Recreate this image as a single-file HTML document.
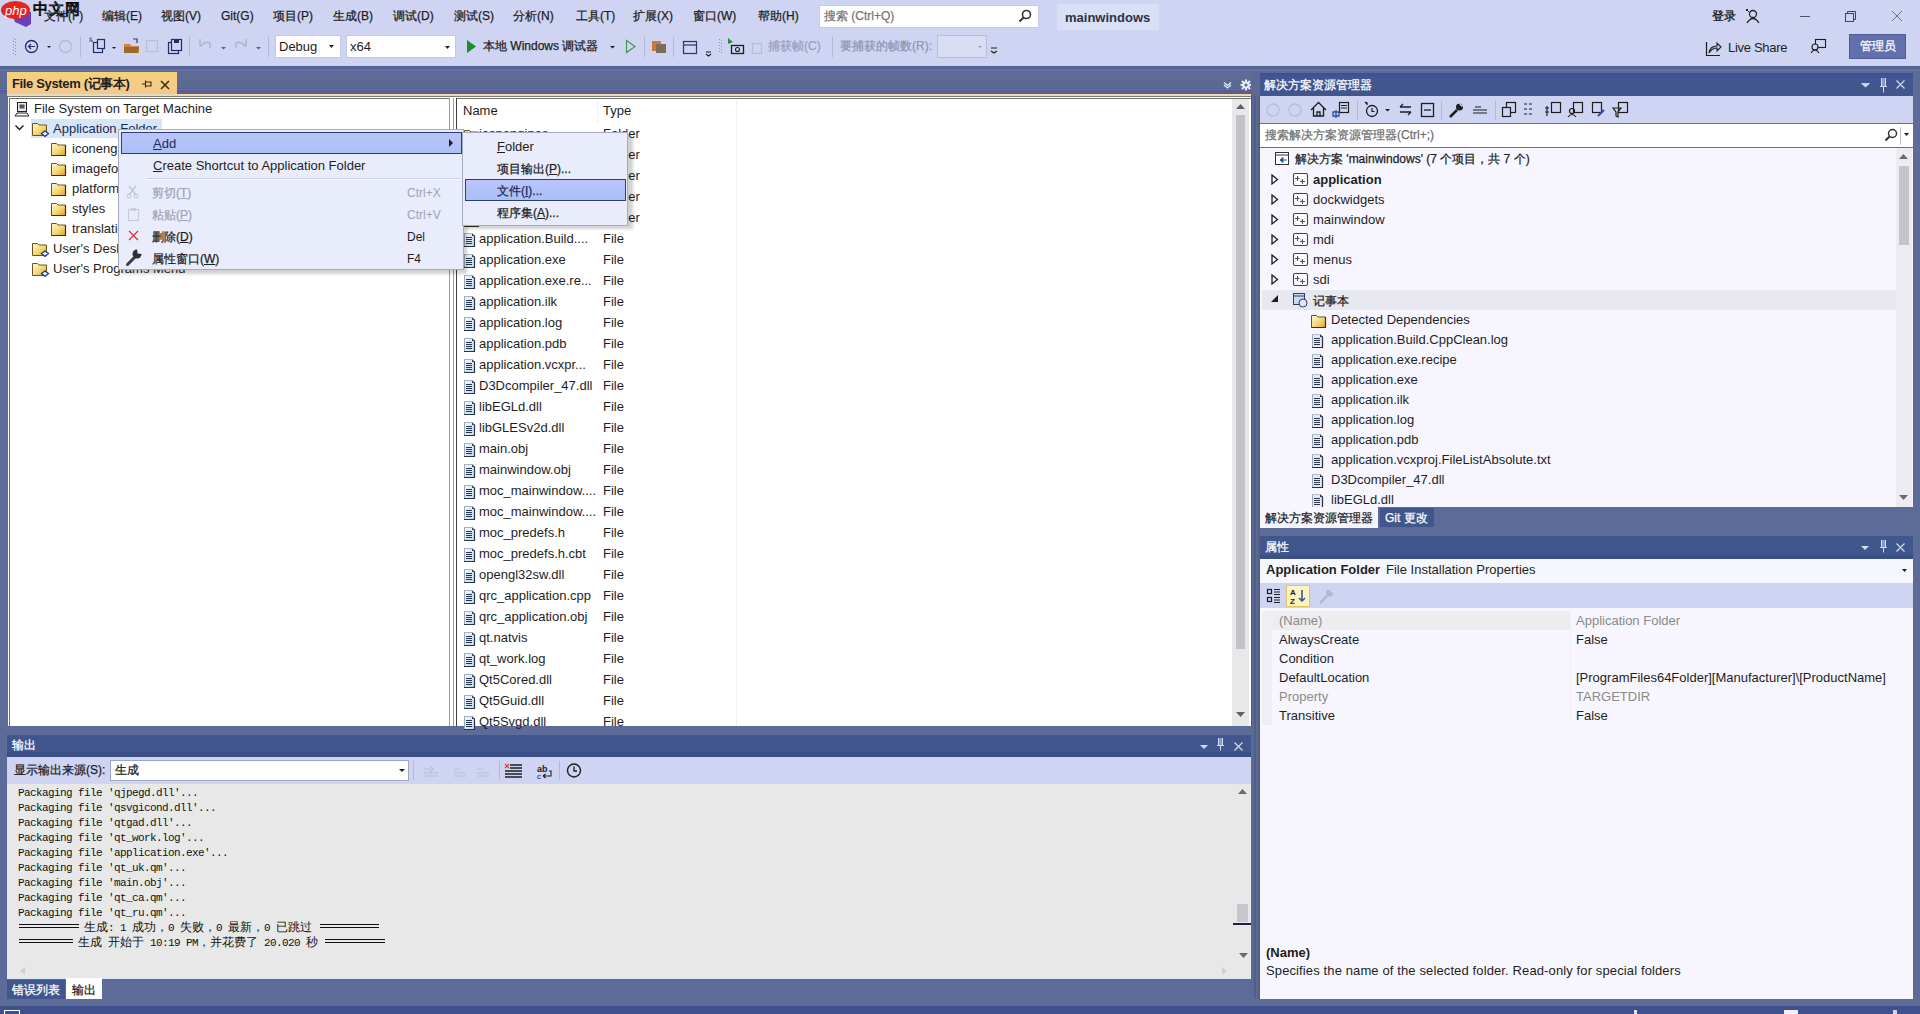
<!DOCTYPE html>
<html><head><meta charset="utf-8">
<style>
*{margin:0;padding:0;box-sizing:border-box}
html,body{width:1920px;height:1014px;overflow:hidden;background:#5D6B99;font-family:"Liberation Sans",sans-serif;font-size:13px;color:#1E1E1E}
.a{position:absolute}
.t{position:absolute;white-space:nowrap;line-height:16px}
.cj{font-size:12px;-webkit-text-stroke:0.25px currentColor}
svg{position:absolute;overflow:visible}
</style></head><body>

<!-- ===== TOP BAR ===== -->
<div class="a" style="left:0;top:0;width:1920px;height:66px;background:#CED4F1"></div>
<!-- logo watermark -->
<svg style="left:0;top:0" width="90" height="30">
  <path d="M12 14 L22 10 L31 12 L31 24 L26 27 L15 22 Z" fill="#6B3FB8"/>
  <ellipse cx="15.5" cy="10" rx="14.5" ry="9" fill="#E8241C"/>
  <text x="5" y="14.5" font-family="Liberation Sans" font-size="13" font-style="italic" fill="#fff">php</text>
  <text x="33" y="14" font-size="15" fill="#DDE1F2" stroke="#000" stroke-width="0.9" letter-spacing="1">中文网</text>
</svg>
<div class="t cj" style="left:44px;top:8px">文件(F)</div>
<div class="t cj" style="left:102px;top:8px">编辑(E)</div>
<div class="t cj" style="left:161px;top:8px">视图(V)</div>
<div class="t cj" style="left:221px;top:8px">Git(G)</div>
<div class="t cj" style="left:273px;top:8px">项目(P)</div>
<div class="t cj" style="left:333px;top:8px">生成(B)</div>
<div class="t cj" style="left:393px;top:8px">调试(D)</div>
<div class="t cj" style="left:454px;top:8px">测试(S)</div>
<div class="t cj" style="left:513px;top:8px">分析(N)</div>
<div class="t cj" style="left:576px;top:8px">工具(T)</div>
<div class="t cj" style="left:633px;top:8px">扩展(X)</div>
<div class="t cj" style="left:693px;top:8px">窗口(W)</div>
<div class="t cj" style="left:758px;top:8px">帮助(H)</div>
<!-- search -->
<div class="a" style="left:819px;top:5px;width:220px;height:23px;background:#fff;border:1px solid #C6CBE0"></div>
<div class="t cj" style="left:824px;top:8px;color:#777">搜索 (Ctrl+Q)</div>
<svg style="left:1018px;top:9px" width="14" height="14"><circle cx="8.5" cy="5.5" r="4" fill="none" stroke="#333" stroke-width="1.6"/><path d="M5.5 8.5 L1.5 12.5" stroke="#333" stroke-width="2"/></svg>
<!-- solution name -->
<div class="a" style="left:1057px;top:4px;width:102px;height:26px;background:#D9DFF5"></div>
<div class="t" style="left:1065px;top:10px;font-weight:bold;color:#2B3245">mainwindows</div>
<!-- login -->
<div class="t cj" style="left:1712px;top:8px;color:#111;-webkit-text-stroke:0.3px #111">登录</div>
<svg style="left:1744px;top:8px" width="18" height="16"><circle cx="9" cy="6" r="3.5" fill="none" stroke="#222" stroke-width="1.3"/><path d="M3 15 Q9 6 15 15" fill="none" stroke="#222" stroke-width="1.3"/><path d="M2 1 L5 4 M4 1 L2 3" stroke="#222" stroke-width="1"/></svg>
<!-- window controls -->
<div class="a" style="left:1800px;top:16px;width:10px;height:1px;background:#50546A"></div>
<svg style="left:1845px;top:11px" width="12" height="12"><rect x="0.5" y="2.5" width="8" height="8" fill="none" stroke="#444"/><path d="M2.5 2.5 V0.5 H10.5 V8.5 H8.5" fill="none" stroke="#444"/></svg>
<svg style="left:1891px;top:10px" width="12" height="12"><path d="M1 1 L11 11 M11 1 L1 11" stroke="#6A6E80" stroke-width="1"/></svg>



<!-- ===== TOOLBAR ===== -->
<svg style="left:0;top:33px" width="1920" height="33">
 <g fill="#8C94B8"><rect x="13" y="5" width="1" height="1"/><rect x="13" y="8" width="1" height="1"/><rect x="13" y="11" width="1" height="1"/><rect x="13" y="14" width="1" height="1"/><rect x="13" y="17" width="1" height="1"/><rect x="13" y="20" width="1" height="1"/><rect x="15" y="6" width="1" height="1"/><rect x="15" y="9" width="1" height="1"/><rect x="15" y="12" width="1" height="1"/><rect x="15" y="15" width="1" height="1"/><rect x="15" y="18" width="1" height="1"/><rect x="15" y="21" width="1" height="1"/></g>
 <!-- back -->
 <circle cx="31.5" cy="13.5" r="6" fill="none" stroke="#1F2E66" stroke-width="1.3"/>
 <path d="M28.5 13.5 H35 M31 11 L28.5 13.5 L31 16" fill="none" stroke="#1F2E66" stroke-width="1.2"/>
 <path d="M47 13 h4 l-2 2z" fill="#1E1E1E"/>
 <circle cx="65.5" cy="13.5" r="6" fill="none" stroke="#B4BAD4" stroke-width="1.3"/>
 <rect x="80" y="4" width="1" height="20" fill="#B2B9D6"/>
 <!-- new project -->
 <rect x="93.5" y="9.5" width="9" height="10" fill="none" stroke="#1F2E66" stroke-width="1.2"/>
 <rect x="97.5" y="6.5" width="7" height="9" fill="#CED4F1" stroke="#1F2E66" stroke-width="1.2"/>
 <path d="M89 5 l4 4 M89 8 h4 M91 4 v4" stroke="#555" stroke-width="0.8"/>
 <path d="M112 14 h4 l-2 2z" fill="#1E1E1E"/>
 <!-- open -->
 <path d="M124 11 h6 l1 2 h8 v7 h-15z" fill="#C8873C"/>
 <path d="M124 14 h15 l-1 6 h-14z" fill="#A0672A"/>
 <path d="M133 6 l4 0 l0 4" fill="none" stroke="#2F3B70" stroke-width="1.2"/>
 <!-- save disabled -->
 <rect x="146.5" y="7.5" width="11" height="11" fill="none" stroke="#B8BED8" stroke-width="1.2"/>
 <!-- save all -->
 <rect x="168.5" y="9.5" width="10" height="11" fill="none" stroke="#1F2E66" stroke-width="1.2"/>
 <rect x="171.5" y="6.5" width="10" height="11" fill="#CED4F1" stroke="#1F2E66" stroke-width="1.2"/>
 <rect x="174" y="7" width="5" height="3" fill="#1F2E66"/>
 <rect x="189" y="4" width="1" height="20" fill="#B2B9D6"/>
 <!-- undo redo disabled -->
 <path d="M200 6 v7 h2 M201 13 q4 -5 9 -3 v5" fill="none" stroke="#B0B6D2" stroke-width="1.6"/>
 <path d="M221 14 h5 l-2.5 2.5z" fill="#5A5E84"/>
 <path d="M246 6 v7 h-2 M245 13 q-4 -5 -9 -3 v5" fill="none" stroke="#B0B6D2" stroke-width="1.6"/>
 <path d="M256 14 h5 l-2.5 2.5z" fill="#5A5E84"/>
 <rect x="268" y="4" width="1" height="20" fill="#B2B9D6"/>
 <!-- play -->
 <path d="M467 7 L476 13.5 L467 20z" fill="#1E8C2E"/>
 <path d="M610 13 h5 l-2.5 2.5z" fill="#1E1E1E"/>
 <path d="M626.5 7.5 L635 13.5 L626.5 19.5z" fill="none" stroke="#3C9C4C" stroke-width="1.2"/>
 <rect x="644" y="4" width="1" height="20" fill="#B2B9D6"/>
 <!-- attach icon -->
 <rect x="652" y="8" width="9" height="10" fill="#C97B3C"/>
 <rect x="656" y="11" width="10" height="9" fill="#7E6C5A"/>
 <rect x="673" y="4" width="1" height="20" fill="#B2B9D6"/>
 <!-- window icon -->
 <rect x="683.5" y="8.5" width="13" height="12" fill="none" stroke="#2B3566" stroke-width="1.2"/>
 <path d="M684 12 h12" stroke="#2B3566" stroke-width="1.2"/>
 <path d="M706 19 h5 M706 21 l2.5 2 l2.5 -2" stroke="#1E1E1E" stroke-width="1.1" fill="none"/>
 <g fill="#8C94B8"><rect x="719" y="6" width="1" height="1"/><rect x="719" y="9" width="1" height="1"/><rect x="719" y="12" width="1" height="1"/><rect x="719" y="15" width="1" height="1"/><rect x="719" y="18" width="1" height="1"/><rect x="721" y="7" width="1" height="1"/><rect x="721" y="10" width="1" height="1"/><rect x="721" y="13" width="1" height="1"/><rect x="721" y="16" width="1" height="1"/><rect x="721" y="19" width="1" height="1"/></g>
 <!-- capture icon -->
 <path d="M728 5 l5 4 l-5 2z" fill="#2A8A3A"/>
 <rect x="731.5" y="12.5" width="12" height="8" fill="none" stroke="#1E1E1E" stroke-width="1.3"/>
 <circle cx="737.5" cy="16.5" r="2" fill="none" stroke="#1E1E1E" stroke-width="1.1"/>
 <rect x="752.5" y="10.5" width="9" height="10" fill="none" stroke="#B8BED8" stroke-width="1.2"/>
 <rect x="832" y="4" width="1" height="20" fill="#B2B9D6"/>
 <path d="M991 15 h6 M991 18 l3 2 l3 -2" stroke="#1E1E1E" stroke-width="1.1" fill="none"/>
 <!-- live share icon -->
 <path d="M1706.5 9 v13.5 h13.5" fill="none" stroke="#1E1E1E" stroke-width="1.2"/>
 <path d="M1709 20 q1 -7 8 -7 v-3 l4 4 l-4 4 v-3 q-5 0 -8 5z" fill="none" stroke="#1E1E1E" stroke-width="1.1"/>
 <!-- feedback icon -->
 <rect x="1815.5" y="6.5" width="10" height="8" fill="none" stroke="#1E1E1E" stroke-width="1.1"/>
 <circle cx="1815" cy="14" r="3" fill="#CED4F1" stroke="#1E1E1E" stroke-width="1.1"/>
 <path d="M1811 20 q4 -6 8 0" fill="none" stroke="#1E1E1E" stroke-width="1.1"/>
</svg>
<div class="a" style="left:275px;top:35px;width:66px;height:23px;background:#fff;border:1px solid #C2C8DD"></div>
<div class="t" style="left:279px;top:39px">Debug</div>
<svg style="left:329px;top:45px" width="6" height="4"><path d="M0 0h5l-2.5 3z" fill="#1E1E1E"/></svg>
<div class="a" style="left:346px;top:35px;width:110px;height:23px;background:#fff;border:1px solid #C2C8DD"></div>
<div class="t" style="left:350px;top:39px">x64</div>
<svg style="left:445px;top:46px" width="6" height="4"><path d="M0 0h5l-2.5 3z" fill="#1E1E1E"/></svg>
<div class="t cj" style="left:483px;top:38px">本地 Windows 调试器</div>
<div class="t cj" style="left:768px;top:38px;color:#9AA0BC">捕获帧(C)</div>
<div class="t cj" style="left:840px;top:38px;color:#8E95B3">要捕获的帧数(R):</div>
<div class="a" style="left:937px;top:35px;width:50px;height:23px;background:#D8DDF3;border:1px solid #B8BED8"></div>
<svg style="left:978px;top:46px" width="6" height="4"><path d="M0 0h4l-2 2z" fill="#9AA0BC"/></svg>
<div class="t" style="left:1728px;top:40px;letter-spacing:-0.3px">Live Share</div>
<div class="a" style="left:1849px;top:34px;width:57px;height:25px;background:#6271AC;border:1px solid #4E5C96"></div>
<div class="t cj" style="left:1860px;top:38px;color:#fff">管理员</div>

<!-- ===== DARK BAND ===== -->
<div class="a" style="left:0;top:66px;width:1920px;height:6px;background:linear-gradient(#4E5F8E 0 1px,#5D6C9E 1px 2px,#4F5F90 2px 3px,#6272A3 3px 5px,#5B6A9A 5px)"></div>

<!-- ===== LEFT DOC WELL ===== -->

<svg width="0" height="0" style="position:absolute">
 <defs>
  <linearGradient id="gfold" x1="0" y1="0" x2="1" y2="1"><stop offset="0" stop-color="#FFF8D8"/><stop offset="0.55" stop-color="#F5D870"/><stop offset="1" stop-color="#E39A2A"/></linearGradient>
  <linearGradient id="gfile" x1="0" y1="0" x2="1" y2="1"><stop offset="0" stop-color="#F4FBFF"/><stop offset="1" stop-color="#BFD6EC"/></linearGradient>
  <g id="ifold"><path d="M0.5 1.5 h5 l1.5 1.5 h7.5 v10.5 h-14z" fill="url(#gfold)" stroke="#6A5526" stroke-width="1"/><path d="M14.5 3 v10.5 h-14" fill="none" stroke="#3C2E10" stroke-width="1.2"/></g>
  <g id="ifoldsp"><path d="M0.5 1.5 h5 l1.5 1.5 h7.5 v10.5 h-14z" fill="url(#gfold)" stroke="#6A5526" stroke-width="1"/><path d="M13 9 l3.5 2.5 l-3.5 3 l-3.5 -3z" fill="#E8F0FF" stroke="#1E3A8A" stroke-width="1.3"/></g>
  <g id="ifile"><path d="M0 1 h8 l3 3 v11 h-11z" fill="url(#gfile)"/><path d="M0.5 1 v13.5" stroke="#9AA6B8" stroke-width="1"/><path d="M0.5 1.5 h7.5" stroke="#A8B2C2" stroke-width="1"/><path d="M10.5 3.5 v11 M0 14.5 h11" stroke="#2A3548" stroke-width="1.2"/><path d="M8 1 l3 3 h-3z" fill="#3A4A5C"/><path d="M2 5.5 h6 M2 7.5 h6 M2 9.5 h6 M2 11.5 h6" stroke="#25354F" stroke-width="1"/></g>
  <g id="icomp"><rect x="3.5" y="0.5" width="9" height="9" fill="#E8E8E8" stroke="#222" stroke-width="1"/><rect x="5.5" y="2.5" width="5" height="4" fill="#555"/><path d="M1 14 l2 -3 h10 l2 3z" fill="#fff" stroke="#222" stroke-width="1"/></g>
 </defs>
</svg>
<!-- tab row -->
<div class="a" style="left:0;top:72px;width:1252px;height:22px;background:linear-gradient(#5D6B96 0 8px,#5E6898 8px 10px,#5A6C8E 10px 16px,#53639A 16px 17px,#6470AE 17px 18px,#57599A 18px 19px,#5F6290 19px 20px)"></div>
<div class="a" style="left:177px;top:92px;width:1075px;height:2px;background:#675A78"></div>
<div class="a" style="left:7px;top:72px;width:170px;height:24px;background:linear-gradient(#F2D27A,#F5CC84 40%,#F3C78C)"></div>
<div class="t" style="left:12px;top:76px;font-weight:bold;color:#1E1E1E;letter-spacing:-0.35px">File System (记事本)</div>
<svg style="left:142px;top:79px" width="11" height="10"><path d="M0 5 h3 M3.5 1.5 v7 M3.5 3 h5.5 v4 h-5.5" fill="none" stroke="#3A2A10" stroke-width="1.1"/></svg>
<svg style="left:160px;top:80px" width="10" height="10"><path d="M1 1 L9 9 M9 1 L1 9" stroke="#3A2A10" stroke-width="1.5"/></svg>
<svg style="left:1223px;top:81px" width="10" height="8"><path d="M1 1.5 L4.5 4.5 L8 1.5 M1 4 L4.5 7 L8 4" fill="none" stroke="#E8ECF8" stroke-width="1.3"/></svg>
<svg style="left:1240px;top:79px" width="12" height="12"><g stroke="#E8ECF8" stroke-width="2"><path d="M6 0.5 v11 M0.5 6 h11 M2 2 l8 8 M10 2 l-8 8"/></g><circle cx="6" cy="6" r="3.6" fill="#E8ECF8"/><circle cx="6" cy="6" r="1.6" fill="#5D6B99"/></svg>
<div class="a" style="left:7px;top:94px;width:1244px;height:2px;background:#E6DCBC"></div>
<!-- content -->
<div class="a" style="left:8px;top:96px;width:1243px;height:630px;background:#fff;border-top:1px solid #7C7C70"></div>
<div class="a" style="left:9px;top:98px;width:440px;height:628px;background:#FFFFFF;border-top:1px solid #6E6E6E;border-left:1px solid #6E6E6E"></div>
<div class="a" style="left:449px;top:98px;width:8px;height:628px;background:#fff;border-left:1px solid #A0A0A0;border-right:1px solid #404040"></div>
<div class="a" style="left:453px;top:98px;width:1px;height:628px;background:#A0A0A0"></div>
<div class="a" style="left:457px;top:98px;width:794px;height:628px;background:#fff;border-top:1px solid #6E6E6E"></div>
<div class="a" style="left:597px;top:100px;width:1px;height:24px;background:#F0F0F0"></div>
<div class="a" style="left:736px;top:100px;width:1px;height:626px;background:#F0F0F0"></div>
<div class="t" style="left:463px;top:103px">Name</div>
<div class="t" style="left:603px;top:103px">Type</div>
<svg style="left:14px;top:102px" width="16" height="15"><use href="#icomp"/></svg><div class="t" style="left:34px;top:101px">File System on Target Machine</div>
<div class="a" style="left:31px;top:119px;width:131px;height:19px;background:#D5E6F7"></div>
<svg style="left:15px;top:125px" width="10" height="6"><path d="M0.5 0.5 L4.5 4.5 L8.5 0.5" fill="none" stroke="#1E1E1E" stroke-width="1.4"/></svg>
<svg style="left:32px;top:122px" width="17" height="14"><use href="#ifoldsp"/></svg><div class="t" style="left:53px;top:121px;color:#1B2A55">Application Folder</div>
<svg style="left:51px;top:142px" width="16" height="14"><use href="#ifold"/></svg><div class="t" style="left:72px;top:141px">iconengines</div>
<svg style="left:51px;top:162px" width="16" height="14"><use href="#ifold"/></svg><div class="t" style="left:72px;top:161px">imageformats</div>
<svg style="left:51px;top:182px" width="16" height="14"><use href="#ifold"/></svg><div class="t" style="left:72px;top:181px">platforms</div>
<svg style="left:51px;top:202px" width="16" height="14"><use href="#ifold"/></svg><div class="t" style="left:72px;top:201px">styles</div>
<svg style="left:51px;top:222px" width="16" height="14"><use href="#ifold"/></svg><div class="t" style="left:72px;top:221px">translations</div>
<svg style="left:32px;top:242px" width="17" height="14"><use href="#ifoldsp"/></svg><div class="t" style="left:53px;top:241px">User's Desktop</div>
<svg style="left:32px;top:262px" width="17" height="14"><use href="#ifoldsp"/></svg><div class="t" style="left:53px;top:261px">User's Programs Menu</div>
<svg style="left:464px;top:129px" width="16" height="14"><use href="#ifold"/></svg><div class="t" style="left:479px;top:126px">iconengines</div><div class="t" style="left:603px;top:126px">Folder</div>
<svg style="left:464px;top:150px" width="16" height="14"><use href="#ifold"/></svg><div class="t" style="left:479px;top:147px">imageformats</div><div class="t" style="left:603px;top:147px">Folder</div>
<svg style="left:464px;top:171px" width="16" height="14"><use href="#ifold"/></svg><div class="t" style="left:479px;top:168px">platforms</div><div class="t" style="left:603px;top:168px">Folder</div>
<svg style="left:464px;top:192px" width="16" height="14"><use href="#ifold"/></svg><div class="t" style="left:479px;top:189px">styles</div><div class="t" style="left:603px;top:189px">Folder</div>
<svg style="left:464px;top:213px" width="16" height="14"><use href="#ifold"/></svg><div class="t" style="left:479px;top:210px">translations</div><div class="t" style="left:603px;top:210px">Folder</div>
<svg style="left:464px;top:232px" width="12" height="15"><use href="#ifile"/></svg><div class="t" style="left:479px;top:231px">application.Build....</div><div class="t" style="left:603px;top:231px">File</div>
<svg style="left:464px;top:253px" width="12" height="15"><use href="#ifile"/></svg><div class="t" style="left:479px;top:252px">application.exe</div><div class="t" style="left:603px;top:252px">File</div>
<svg style="left:464px;top:274px" width="12" height="15"><use href="#ifile"/></svg><div class="t" style="left:479px;top:273px">application.exe.re...</div><div class="t" style="left:603px;top:273px">File</div>
<svg style="left:464px;top:295px" width="12" height="15"><use href="#ifile"/></svg><div class="t" style="left:479px;top:294px">application.ilk</div><div class="t" style="left:603px;top:294px">File</div>
<svg style="left:464px;top:316px" width="12" height="15"><use href="#ifile"/></svg><div class="t" style="left:479px;top:315px">application.log</div><div class="t" style="left:603px;top:315px">File</div>
<svg style="left:464px;top:337px" width="12" height="15"><use href="#ifile"/></svg><div class="t" style="left:479px;top:336px">application.pdb</div><div class="t" style="left:603px;top:336px">File</div>
<svg style="left:464px;top:358px" width="12" height="15"><use href="#ifile"/></svg><div class="t" style="left:479px;top:357px">application.vcxpr...</div><div class="t" style="left:603px;top:357px">File</div>
<svg style="left:464px;top:379px" width="12" height="15"><use href="#ifile"/></svg><div class="t" style="left:479px;top:378px">D3Dcompiler_47.dll</div><div class="t" style="left:603px;top:378px">File</div>
<svg style="left:464px;top:400px" width="12" height="15"><use href="#ifile"/></svg><div class="t" style="left:479px;top:399px">libEGLd.dll</div><div class="t" style="left:603px;top:399px">File</div>
<svg style="left:464px;top:421px" width="12" height="15"><use href="#ifile"/></svg><div class="t" style="left:479px;top:420px">libGLESv2d.dll</div><div class="t" style="left:603px;top:420px">File</div>
<svg style="left:464px;top:442px" width="12" height="15"><use href="#ifile"/></svg><div class="t" style="left:479px;top:441px">main.obj</div><div class="t" style="left:603px;top:441px">File</div>
<svg style="left:464px;top:463px" width="12" height="15"><use href="#ifile"/></svg><div class="t" style="left:479px;top:462px">mainwindow.obj</div><div class="t" style="left:603px;top:462px">File</div>
<svg style="left:464px;top:484px" width="12" height="15"><use href="#ifile"/></svg><div class="t" style="left:479px;top:483px">moc_mainwindow....</div><div class="t" style="left:603px;top:483px">File</div>
<svg style="left:464px;top:505px" width="12" height="15"><use href="#ifile"/></svg><div class="t" style="left:479px;top:504px">moc_mainwindow....</div><div class="t" style="left:603px;top:504px">File</div>
<svg style="left:464px;top:526px" width="12" height="15"><use href="#ifile"/></svg><div class="t" style="left:479px;top:525px">moc_predefs.h</div><div class="t" style="left:603px;top:525px">File</div>
<svg style="left:464px;top:547px" width="12" height="15"><use href="#ifile"/></svg><div class="t" style="left:479px;top:546px">moc_predefs.h.cbt</div><div class="t" style="left:603px;top:546px">File</div>
<svg style="left:464px;top:568px" width="12" height="15"><use href="#ifile"/></svg><div class="t" style="left:479px;top:567px">opengl32sw.dll</div><div class="t" style="left:603px;top:567px">File</div>
<svg style="left:464px;top:589px" width="12" height="15"><use href="#ifile"/></svg><div class="t" style="left:479px;top:588px">qrc_application.cpp</div><div class="t" style="left:603px;top:588px">File</div>
<svg style="left:464px;top:610px" width="12" height="15"><use href="#ifile"/></svg><div class="t" style="left:479px;top:609px">qrc_application.obj</div><div class="t" style="left:603px;top:609px">File</div>
<svg style="left:464px;top:631px" width="12" height="15"><use href="#ifile"/></svg><div class="t" style="left:479px;top:630px">qt.natvis</div><div class="t" style="left:603px;top:630px">File</div>
<svg style="left:464px;top:652px" width="12" height="15"><use href="#ifile"/></svg><div class="t" style="left:479px;top:651px">qt_work.log</div><div class="t" style="left:603px;top:651px">File</div>
<svg style="left:464px;top:673px" width="12" height="15"><use href="#ifile"/></svg><div class="t" style="left:479px;top:672px">Qt5Cored.dll</div><div class="t" style="left:603px;top:672px">File</div>
<svg style="left:464px;top:694px" width="12" height="15"><use href="#ifile"/></svg><div class="t" style="left:479px;top:693px">Qt5Guid.dll</div><div class="t" style="left:603px;top:693px">File</div>
<svg style="left:464px;top:715px" width="12" height="15"><use href="#ifile"/></svg><div class="t" style="left:479px;top:714px">Qt5Svgd.dll</div><div class="t" style="left:603px;top:714px">File</div>
<!-- list scrollbar -->
<div class="a" style="left:1232px;top:99px;width:17px;height:627px;background:#E8E8E8"></div>
<svg style="left:1236px;top:104px" width="9" height="5"><path d="M0 5 L4.5 0 L9 5z" fill="#606060"/></svg>
<div class="a" style="left:1236px;top:115px;width:9px;height:534px;background:#C2C3C9"></div>
<svg style="left:1236px;top:712px" width="9" height="5"><path d="M0 0 L4.5 5 L9 0z" fill="#606060"/></svg>



<!-- ===== CONTEXT MENU ===== -->
<div class="a" style="left:121px;top:132px;width:346px;height:142px;background:rgba(0,0,0,0.18);filter:blur(1.5px)"></div>
<div class="a" style="left:118px;top:129px;width:346px;height:141px;background:#E9ECFA;border:1px solid #A6ABC4"></div>
<div class="a" style="left:121px;top:132px;width:341px;height:22px;background:linear-gradient(#BAC4FA,#A9C1F6);border:1px solid #2F3D72"></div>
<div class="t" style="left:153px;top:136px;color:#1E2A5A"><u>A</u>dd</div>
<svg style="left:449px;top:139px" width="5" height="8"><path d="M0 0 L4 4 L0 8z" fill="#1E1E1E"/></svg>
<div class="t" style="left:153px;top:158px"><u>C</u>reate Shortcut to Application Folder</div>
<div class="a" style="left:146px;top:178px;width:315px;height:1px;background:#CDD2E6"></div>
<div class="a" style="left:146px;top:179px;width:315px;height:1px;background:#F6F7FD"></div>
<div class="t cj" style="left:152px;top:185px;color:#A0A4B8">剪切(<u>T</u>)</div>
<div class="t" style="left:407px;top:185px;font-size:12px;color:#A0A4B8">Ctrl+X</div>
<div class="t cj" style="left:152px;top:207px;color:#A0A4B8">粘贴(<u>P</u>)</div>
<div class="t" style="left:407px;top:207px;font-size:12px;color:#A0A4B8">Ctrl+V</div>
<div class="t cj" style="left:152px;top:229px">删除(<u>D</u>)</div>
<div class="t" style="left:407px;top:229px;font-size:12px">Del</div>
<div class="t cj" style="left:152px;top:251px">属性窗口(<u>W</u>)</div>
<div class="t" style="left:407px;top:251px;font-size:12px">F4</div>
<svg style="left:126px;top:185px" width="16" height="82">
 <path d="M3 1 L10 10 M10 1 L3 10" stroke="#C0C4D4" stroke-width="1.3"/><circle cx="3" cy="11" r="2" fill="none" stroke="#C0C4D4"/><circle cx="10" cy="11" r="2" fill="none" stroke="#C0C4D4"/>
 <rect x="2.5" y="24.5" width="10" height="11" fill="none" stroke="#C8CCDA" stroke-width="1.2"/><rect x="5" y="23" width="5" height="3" fill="#C8CCDA"/>
 <path d="M3 46 L12 55 M12 46 L3 55" stroke="#D23A3A" stroke-width="1.3"/>
 <path d="M1.5 79.5 L9 72" stroke="#3A3A42" stroke-width="3" stroke-linecap="round"/><circle cx="11" cy="69" r="4.5" fill="#2E2E36"/><path d="M11.5 68.5 L11 63 L16.5 63 L16.5 69z" fill="#E9ECFA"/>
</svg>
<!-- submenu -->
<div class="a" style="left:465px;top:135px;width:168px;height:94px;background:rgba(0,0,0,0.18);filter:blur(1.5px)"></div>
<div class="a" style="left:462px;top:132px;width:166px;height:94px;background:#E9ECFA;border:1px solid #A6ABC4"></div>
<div class="t" style="left:497px;top:139px"><u>F</u>older</div>
<div class="t cj" style="left:497px;top:161px">项目输出(<u>P</u>)...</div>
<div class="a" style="left:465px;top:179px;width:161px;height:22px;background:linear-gradient(#BAC4FA,#A9C1F6);border:1px solid #2F3D72"></div>
<div class="t cj" style="left:497px;top:183px;color:#1E2A5A">文件(<u>I</u>)...</div>
<div class="t cj" style="left:497px;top:205px">程序集(<u>A</u>)...</div>

<!-- ===== OUTPUT ===== -->

<!-- ===== OUTPUT PANEL ===== -->
<style>.mono{font-family:"Liberation Mono",monospace;font-size:11px;letter-spacing:-0.6px;line-height:15px;color:#111}
.mono .c{font-size:12px}
.mono .c{letter-spacing:0}</style>
<div class="a" style="left:7px;top:735px;width:1244px;height:17px;background:#40568D"></div>
<div class="a" style="left:7px;top:752px;width:1244px;height:5px;background:#3A4F86"></div>
<div class="t cj" style="left:12px;top:737px;color:#fff">输出</div>
<svg style="left:1200px;top:745px" width="9" height="5"><path d="M0 0 h8 l-4 4z" fill="#D4DAEE"/></svg>
<svg style="left:1216px;top:737px" width="10" height="15"><rect x="2" y="1" width="5" height="7" fill="#8C98C4"/><path d="M2.5 1 v7 M6.5 1 v7 M1 8.5 h7 M4.5 8.5 v5" fill="none" stroke="#D4DAEE" stroke-width="1"/></svg>
<svg style="left:1233px;top:741px" width="11" height="11"><path d="M1.5 1.5 L9.5 9.5 M9.5 1.5 L1.5 9.5" stroke="#D4DAEE" stroke-width="1.2"/></svg>
<div class="a" style="left:7px;top:757px;width:1244px;height:27px;background:#CED4F1"></div>
<div class="t cj" style="left:14px;top:762px">显示输出来源(S):</div>
<div class="a" style="left:110px;top:760px;width:299px;height:21px;background:#fff;border:1px solid #9FA6C2"></div>
<div class="t cj" style="left:115px;top:762px">生成</div>
<svg style="left:399px;top:769px" width="7" height="4"><path d="M0 0 h6 l-3 3z" fill="#1E1E1E"/></svg>
<svg style="left:410px;top:757px" width="180" height="27">
 <rect x="3" y="4" width="1" height="19" fill="#B2B9D6"/>
 <path d="M14 12 h6 M14 16 h14 M14 19 h14 M20 9 l3 3 l-3 3" fill="none" stroke="#B8BED6" stroke-width="1.2"/>
 <path d="M44 12 h6 M44 16 h12 M44 19 h12" fill="none" stroke="#B8BED6" stroke-width="1.2"/>
 <path d="M67 12 h6 M67 16 h12 M67 19 h12" fill="none" stroke="#B8BED6" stroke-width="1.2"/>
 <rect x="89" y="4" width="1" height="19" fill="#B2B9D6"/>
 <path d="M100 8 h12 M100 11 h12 M95 14 h17 M95 17 h17 M95 20 h17" stroke="#1E1E1E" stroke-width="1.3"/>
 <path d="M95 7 l4 4 M99 7 l-4 4" stroke="#D04040" stroke-width="1.1"/>
 <text x="127" y="15" font-family="Liberation Sans" font-size="9" font-weight="bold" fill="#1E1E1E">ab</text>
 <text x="127" y="22" font-family="Liberation Sans" font-size="8" fill="#1E1E1E">c</text>
 <path d="M133 19 h8 v-5 h-2 M133 19 l2.5 -2 M133 19 l2.5 2" fill="none" stroke="#1E1E1E" stroke-width="1.1"/>
 <rect x="149" y="4" width="1" height="19" fill="#B2B9D6"/>
 <circle cx="164" cy="13.5" r="6.5" fill="none" stroke="#1E1E1E" stroke-width="1.4"/>
 <path d="M164 9.5 v4.5 h3" fill="none" stroke="#1E1E1E" stroke-width="1.3"/>
</svg>
<div class="a" style="left:7px;top:784px;width:1244px;height:195px;background:#E8E8E8"></div>
<div class="t mono" style="left:18px;top:786px">Packaging file &#39;qjpegd.dll&#39;...</div>
<div class="t mono" style="left:18px;top:801px">Packaging file &#39;qsvgicond.dll&#39;...</div>
<div class="t mono" style="left:18px;top:816px">Packaging file &#39;qtgad.dll&#39;...</div>
<div class="t mono" style="left:18px;top:831px">Packaging file &#39;qt_work.log&#39;...</div>
<div class="t mono" style="left:18px;top:846px">Packaging file &#39;application.exe&#39;...</div>
<div class="t mono" style="left:18px;top:861px">Packaging file &#39;qt_uk.qm&#39;...</div>
<div class="t mono" style="left:18px;top:876px">Packaging file &#39;main.obj&#39;...</div>
<div class="t mono" style="left:18px;top:891px">Packaging file &#39;qt_ca.qm&#39;...</div>
<div class="t mono" style="left:18px;top:906px">Packaging file &#39;qt_ru.qm&#39;...</div>
<div class="a" style="left:19px;top:924px;width:60px;height:1px;background:#111"></div>
<div class="a" style="left:19px;top:927px;width:60px;height:1px;background:#111"></div>
<div class="t mono" style="left:84px;top:921px"><span class="c">生成</span>: 1 <span class="c">成功，</span>0 <span class="c">失败，</span>0 <span class="c">最新，</span>0 <span class="c">已跳过</span></div>
<div class="a" style="left:320px;top:924px;width:59px;height:1px;background:#111"></div>
<div class="a" style="left:320px;top:927px;width:59px;height:1px;background:#111"></div>
<div class="a" style="left:19px;top:939px;width:54px;height:1px;background:#111"></div>
<div class="a" style="left:19px;top:942px;width:54px;height:1px;background:#111"></div>
<div class="t mono" style="left:78px;top:936px"><span class="c">生成</span> <span class="c">开始于</span> 10:19 PM<span class="c">，并花费了</span> 20.020 <span class="c">秒</span></div>
<div class="a" style="left:325px;top:939px;width:60px;height:1px;background:#111"></div>
<div class="a" style="left:325px;top:942px;width:60px;height:1px;background:#111"></div>
<svg style="left:1238px;top:789px" width="9" height="5"><path d="M0 5 L4.5 0 L9 5z" fill="#6A6A6A"/></svg>
<div class="a" style="left:1237px;top:904px;width:11px;height:18px;background:#C6C6CC"></div>
<div class="a" style="left:1233px;top:923px;width:19px;height:2px;background:#1A2340"></div>
<svg style="left:1239px;top:953px" width="9" height="5"><path d="M0 0 L4.5 5 L9 0z" fill="#6A6A6A"/></svg>
<svg style="left:20px;top:967px" width="6" height="8"><path d="M5 0 L0 4 L5 8z" fill="#D0D0D0"/></svg>
<svg style="left:1222px;top:967px" width="6" height="8"><path d="M0 0 L5 4 L0 8z" fill="#D0D0D0"/></svg>
<div class="a" style="left:7px;top:978px;width:1244px;height:1px;background:#D8EAF4"></div>
<!-- bottom tabs -->
<div class="a" style="left:7px;top:980px;width:58px;height:20px;background:#40568D"></div>
<div class="t cj" style="left:12px;top:982px;color:#fff">错误列表</div>
<div class="a" style="left:66px;top:978px;width:36px;height:22px;background:#fff"></div>
<div class="t cj" style="left:72px;top:982px">输出</div>


<!-- ===== RIGHT PANELS ===== -->

<svg width="0" height="0" style="position:absolute">
 <defs>
  <g id="iproj"><rect x="0.5" y="0.5" width="14" height="12" rx="1.5" fill="#FAFAFD" stroke="#444" stroke-width="1.1"/><path d="M4.5 3 v5 M2 5.5 h5 M9.5 6 v5 M7 8.5 h5" stroke="#555" stroke-width="1"/><path d="M5 4 L9 8" stroke="#BBB" stroke-width="0.8"/></g>
  <g id="isetup"><rect x="1.5" y="1.5" width="11" height="11" fill="#C9D9F0" stroke="#2E3E66"/><path d="M1.5 4 h11" stroke="#2E3E66"/><circle cx="11" cy="11" r="4" fill="#E0E8F8" stroke="#2E3E66"/></g>
  <g id="ifile2"><path d="M0 1 h8 l3 3 v11 h-11z" fill="#E4E8F6"/><path d="M0.5 1 v13.5" stroke="#A0A8BC" stroke-width="1"/><path d="M0.5 1.5 h7.5" stroke="#B8C0D0" stroke-width="1"/><path d="M10.5 3.5 v11 M0 14.5 h11" stroke="#2A3040" stroke-width="1.2"/><path d="M8 1 l3 3 h-3z" fill="#2F3A44"/><path d="M2 5.5 h6 M2 7.5 h6 M2 9.5 h6 M2 11.5 h6" stroke="#30364A" stroke-width="1"/></g>
 </defs>
</svg>
<!-- ===== SOLUTION EXPLORER ===== -->
<div class="a" style="left:1251px;top:72px;width:9px;height:934px;background:#5A6A94"></div>
<div class="a" style="left:1251px;top:96px;width:1px;height:630px;background:#505A70"></div><div class="a" style="left:1254px;top:96px;width:2px;height:910px;background:#4E5F8A"></div><div class="a" style="left:1258px;top:96px;width:2px;height:910px;background:#56607C"></div>
<div class="a" style="left:1260px;top:72px;width:653px;height:1px;background:#5B6A9E"></div><div class="a" style="left:1260px;top:73px;width:653px;height:23px;background:linear-gradient(#404F8C,#46579A 30%,#40568D 35%)"></div>
<div class="t cj" style="left:1264px;top:77px;color:#fff">解决方案资源管理器</div>
<svg style="left:1861px;top:83px" width="9" height="5"><path d="M0.5 0.5 L4.5 4 L8.5 0.5z" fill="#D4DAEE" stroke="#D4DAEE" stroke-width="0.8"/></svg>
<svg style="left:1879px;top:77px" width="10" height="17"><rect x="2" y="1" width="5" height="8" fill="#8C98C4"/><path d="M2.5 1 v8 M6.5 1 v8 M1 9.5 h7 M4.5 9.5 v6" fill="none" stroke="#D4DAEE" stroke-width="1"/></svg>
<svg style="left:1895px;top:79px" width="11" height="11"><path d="M1.5 1.5 L9.5 9.5 M9.5 1.5 L1.5 9.5" stroke="#D4DAEE" stroke-width="1.2"/></svg>
<div class="a" style="left:1260px;top:96px;width:653px;height:28px;background:#CED4F1;border-bottom:1px solid #6E7080"></div>
<svg style="left:1260px;top:96px" width="653" height="28">
 <circle cx="13" cy="14" r="6" fill="none" stroke="#B8BED8" stroke-width="1.3"/>
 <circle cx="35" cy="14" r="6" fill="none" stroke="#B8BED8" stroke-width="1.3"/>
 <path d="M51 14 L58.5 6.5 L66 14 M53.5 12 v8 h10 v-8 M57 20 v-4 h3 v4" fill="none" stroke="#1E1E1E" stroke-width="1.3"/>
 <rect x="79.5" y="6.5" width="9" height="10" fill="none" stroke="#1E1E1E" stroke-width="1.2"/>
 <path d="M81 9.5 h6 M81 12 h6" stroke="#1E1E1E"/>
 <path d="M73 16 h6 v4 h-6z M76 14 v8" stroke="#2E4FA0" stroke-width="1.3" fill="none"/>
 <rect x="97" y="5" width="1" height="19" fill="#B2B9D6"/>
 <circle cx="112" cy="15" r="5.5" fill="none" stroke="#1E1E1E" stroke-width="1.3"/>
 <path d="M112 12 v3.5 h2.5 M105 6 l2 2 M107 6 v3" fill="none" stroke="#1E1E1E" stroke-width="1.2"/>
 <path d="M125 13 h5 l-2.5 2.5z" fill="#1E1E1E"/>
 <path d="M140 11 h11 M140 11 l3 -3 M151 16 h-11 M151 16 l-3 3" fill="none" stroke="#1E1E1E" stroke-width="1.3"/>
 <rect x="161.5" y="7.5" width="12" height="13" fill="none" stroke="#1E1E1E" stroke-width="1.3"/>
 <path d="M164 14 h7" stroke="#1E1E1E" stroke-width="1.3"/>
 <rect x="181" y="5" width="1" height="19" fill="#B2B9D6"/>
 <path d="M190 21 L197 14" stroke="#1E1E1E" stroke-width="2.5"/><circle cx="199.5" cy="11" r="3.5" fill="#1E1E1E"/><path d="M199 7 l3 3 l2 -2" fill="none" stroke="#CED4F1" stroke-width="1.5"/>
 <path d="M213 14 h14 M213 17 h14 M215 11 h6" stroke="#1E1E1E" stroke-width="1.2"/>
 <rect x="235" y="5" width="1" height="19" fill="#B2B9D6"/>
 <g fill="none" stroke="#1E1E1E" stroke-width="1.2">
  <rect x="246.5" y="6.5" width="9" height="10"/><rect x="242.5" y="11.5" width="8" height="9" fill="#CED4F1"/>
  <path d="M264 8 h3 M269 8 h3 M264 13 h3 M269 13 h3 M264 18 h3 M269 18 h3"/>
  <rect x="291.5" y="6.5" width="9" height="10"/><path d="M287 10 v10 M285 12 h4 M285 16 h4"/>
  <rect x="313.5" y="6.5" width="9" height="10"/><circle cx="312" cy="15" r="2.5"/><path d="M308 21 q4 -5 8 0"/>
  <rect x="332.5" y="6.5" width="9" height="10"/><path d="M338 20 l6 -6" stroke="#2E4FA0" stroke-width="2"/>
  <rect x="358.5" y="6.5" width="9" height="10"/><path d="M353 12 h8 l-3 4 v5 l-2 -1 v-4z"/>
 </g>
</svg>
<div class="a" style="left:1260px;top:124px;width:653px;height:24px;background:#fff;border-bottom:1px solid #6E7080"></div>
<div class="t cj" style="left:1265px;top:127px;color:#707070">搜索解决方案资源管理器(Ctrl+;)</div>
<svg style="left:1884px;top:128px" width="14" height="14"><circle cx="8.5" cy="5.5" r="4" fill="none" stroke="#333" stroke-width="1.5"/><path d="M5.5 8.5 L1.5 12.5" stroke="#333" stroke-width="2"/></svg>
<div class="a" style="left:1900px;top:127px;width:1px;height:18px;background:#C0C0C0"></div>
<svg style="left:1904px;top:133px" width="6" height="4"><path d="M0 0 h5 l-2.5 3z" fill="#1E1E1E"/></svg>
<div class="a" style="left:1260px;top:148px;width:653px;height:359px;background:#F7F6FE"></div>
<svg style="left:1275px;top:152px" width="15" height="14"><rect x="0.5" y="0.5" width="13" height="12" fill="#fff" stroke="#333"/><path d="M0.5 3 h13" stroke="#333"/><path d="M5 8 l3 -2.5 v5z M8 8 h4" fill="#2E4FA0" stroke="#2E4FA0"/></svg>
<div class="t cj" style="left:1295px;top:151px">解决方案 'mainwindows' (7 个项目，共 7 个)</div>
<svg style="left:1271px;top:174px" width="8" height="12"><path d="M1 1 L6.5 5.5 L1 10z" fill="none" stroke="#1E1E1E" stroke-width="1.3"/></svg>
<svg style="left:1293px;top:173px" width="15" height="14"><use href="#iproj"/></svg>
<div class="t" style="left:1313px;top:172px;font-weight:bold;">application</div>
<svg style="left:1271px;top:194px" width="8" height="12"><path d="M1 1 L6.5 5.5 L1 10z" fill="none" stroke="#1E1E1E" stroke-width="1.3"/></svg>
<svg style="left:1293px;top:193px" width="15" height="14"><use href="#iproj"/></svg>
<div class="t" style="left:1313px;top:192px;">dockwidgets</div>
<svg style="left:1271px;top:214px" width="8" height="12"><path d="M1 1 L6.5 5.5 L1 10z" fill="none" stroke="#1E1E1E" stroke-width="1.3"/></svg>
<svg style="left:1293px;top:213px" width="15" height="14"><use href="#iproj"/></svg>
<div class="t" style="left:1313px;top:212px;">mainwindow</div>
<svg style="left:1271px;top:234px" width="8" height="12"><path d="M1 1 L6.5 5.5 L1 10z" fill="none" stroke="#1E1E1E" stroke-width="1.3"/></svg>
<svg style="left:1293px;top:233px" width="15" height="14"><use href="#iproj"/></svg>
<div class="t" style="left:1313px;top:232px;">mdi</div>
<svg style="left:1271px;top:254px" width="8" height="12"><path d="M1 1 L6.5 5.5 L1 10z" fill="none" stroke="#1E1E1E" stroke-width="1.3"/></svg>
<svg style="left:1293px;top:253px" width="15" height="14"><use href="#iproj"/></svg>
<div class="t" style="left:1313px;top:252px;">menus</div>
<svg style="left:1271px;top:274px" width="8" height="12"><path d="M1 1 L6.5 5.5 L1 10z" fill="none" stroke="#1E1E1E" stroke-width="1.3"/></svg>
<svg style="left:1293px;top:273px" width="15" height="14"><use href="#iproj"/></svg>
<div class="t" style="left:1313px;top:272px;">sdi</div>
<div class="a" style="left:1262px;top:290px;width:634px;height:20px;background:#E6E7EF"></div>
<svg style="left:1271px;top:295px" width="8" height="8"><path d="M7 0 L7 7 L0 7z" fill="#1E1E1E"/></svg>
<svg style="left:1292px;top:292px" width="16" height="16"><use href="#isetup"/></svg>
<div class="t cj" style="left:1313px;top:293px">记事本</div>
<svg style="left:1311px;top:314px" width="16" height="14"><use href="#ifold"/></svg>
<div class="t" style="left:1331px;top:312px">Detected Dependencies</div>
<svg style="left:1312px;top:333px" width="12" height="15"><use href="#ifile2"/></svg>
<div class="t" style="left:1331px;top:332px">application.Build.CppClean.log</div>
<svg style="left:1312px;top:353px" width="12" height="15"><use href="#ifile2"/></svg>
<div class="t" style="left:1331px;top:352px">application.exe.recipe</div>
<svg style="left:1312px;top:373px" width="12" height="15"><use href="#ifile2"/></svg>
<div class="t" style="left:1331px;top:372px">application.exe</div>
<svg style="left:1312px;top:393px" width="12" height="15"><use href="#ifile2"/></svg>
<div class="t" style="left:1331px;top:392px">application.ilk</div>
<svg style="left:1312px;top:413px" width="12" height="15"><use href="#ifile2"/></svg>
<div class="t" style="left:1331px;top:412px">application.log</div>
<svg style="left:1312px;top:433px" width="12" height="15"><use href="#ifile2"/></svg>
<div class="t" style="left:1331px;top:432px">application.pdb</div>
<svg style="left:1312px;top:453px" width="12" height="15"><use href="#ifile2"/></svg>
<div class="t" style="left:1331px;top:452px">application.vcxproj.FileListAbsolute.txt</div>
<svg style="left:1312px;top:473px" width="12" height="15"><use href="#ifile2"/></svg>
<div class="t" style="left:1331px;top:472px">D3Dcompiler_47.dll</div>
<svg style="left:1312px;top:493px" width="12" height="15"><use href="#ifile2"/></svg>
<div class="t" style="left:1331px;top:492px">libEGLd.dll</div>
<div class="a" style="left:1896px;top:148px;width:16px;height:359px;background:#EDEDF1"></div>
<svg style="left:1899px;top:154px" width="9" height="5"><path d="M0 5 L4.5 0 L9 5z" fill="#6A6A6A"/></svg>
<div class="a" style="left:1899px;top:166px;width:10px;height:79px;background:#C4C5CB"></div>
<svg style="left:1899px;top:495px" width="9" height="5"><path d="M0 0 L4.5 5 L9 0z" fill="#6A6A6A"/></svg>
<!-- SE tabs -->
<div class="a" style="left:1260px;top:507px;width:653px;height:21px;background:#5D6B99"></div>
<div class="a" style="left:1260px;top:507px;width:118px;height:21px;background:#F7F6FE"></div>
<div class="t cj" style="left:1265px;top:510px">解决方案资源管理器</div>
<div class="a" style="left:1380px;top:508px;width:54px;height:19px;background:#40568D"></div>
<div class="t cj" style="left:1385px;top:510px;color:#fff">Git 更改</div>

<!-- ===== PROPERTIES ===== -->
<div class="a" style="left:1260px;top:536px;width:653px;height:19px;background:#40568D"></div>
<div class="a" style="left:1260px;top:555px;width:653px;height:4px;background:#3A4F86"></div>
<div class="t cj" style="left:1265px;top:539px;color:#fff">属性</div>
<svg style="left:1861px;top:546px" width="9" height="5"><path d="M0 0 h8 l-4 4z" fill="#D4DAEE"/></svg>
<svg style="left:1879px;top:539px" width="10" height="15"><rect x="2" y="1" width="5" height="7" fill="#8C98C4"/><path d="M2.5 1 v7 M6.5 1 v7 M1 8.5 h7 M4.5 8.5 v5" fill="none" stroke="#D4DAEE" stroke-width="1"/></svg>
<svg style="left:1895px;top:542px" width="11" height="11"><path d="M1.5 1.5 L9.5 9.5 M9.5 1.5 L1.5 9.5" stroke="#D4DAEE" stroke-width="1.2"/></svg>
<div class="a" style="left:1260px;top:559px;width:653px;height:24px;background:#F5F7FD"></div>
<div class="t" style="left:1266px;top:562px;font-weight:bold">Application Folder</div><div class="t" style="left:1386px;top:562px">File Installation Properties</div>
<svg style="left:1902px;top:569px" width="6" height="4"><path d="M0 0 h5 l-2.5 3z" fill="#1E1E1E"/></svg>
<div class="a" style="left:1260px;top:583px;width:653px;height:25px;background:#CED4F1"></div>
<svg style="left:1260px;top:583px" width="100" height="25">
 <g stroke="#1E1E1E" stroke-width="1.2" fill="none"><rect x="7.5" y="6.5" width="4" height="4"/><rect x="7.5" y="14.5" width="4" height="4"/><path d="M14 6.5 h6 M14 9 h6 M14 11.5 h6 M14 14.5 h6 M14 17 h6 M14 19.5 h6"/></g>
 <rect x="26.5" y="2.5" width="23" height="21" fill="#FDF4BF" stroke="#E5C365"/>
 <text x="30" y="12" font-family="Liberation Sans" font-size="8" font-weight="bold" fill="#1E1E1E">A</text>
 <text x="30" y="21" font-family="Liberation Sans" font-size="8" font-weight="bold" fill="#1E1E1E">Z</text>
 <path d="M42 7 v11 M39 15 l3 3 l3 -3" fill="none" stroke="#2E4FA0" stroke-width="1.5"/>
 <path d="M60 20 L67 13" stroke="#B4B8CC" stroke-width="2.5"/><circle cx="69.5" cy="10" r="3.5" fill="#B4B8CC"/><path d="M69 6 l3 3 l2 -2" fill="none" stroke="#CED4F1" stroke-width="1.5"/>
</svg>
<div class="a" style="left:1260px;top:608px;width:653px;height:391px;background:#F7F6FE"></div>
<div class="a" style="left:1262px;top:611px;width:10px;height:114px;background:#EEEEF3"></div>
<div class="a" style="left:1272px;top:611px;width:298px;height:19px;background:#EDEDF0"></div>
<div class="a" style="left:1570px;top:611px;width:1px;height:114px;background:#F0F0F4"></div>
<div class="t" style="left:1279px;top:613px;color:#8A8A8A;">(Name)</div>
<div class="t" style="left:1576px;top:613px;color:#8A8A8A;">Application Folder</div>
<div class="t" style="left:1279px;top:632px;">AlwaysCreate</div>
<div class="t" style="left:1576px;top:632px;">False</div>
<div class="t" style="left:1279px;top:651px;">Condition</div>
<div class="t" style="left:1279px;top:670px;">DefaultLocation</div>
<div class="t" style="left:1576px;top:670px;">[ProgramFiles64Folder][Manufacturer]\[ProductName]</div>
<div class="t" style="left:1279px;top:689px;color:#8A8A8A;">Property</div>
<div class="t" style="left:1576px;top:689px;color:#8A8A8A;">TARGETDIR</div>
<div class="t" style="left:1279px;top:708px;">Transitive</div>
<div class="t" style="left:1576px;top:708px;">False</div>
<div class="t" style="left:1266px;top:945px;font-weight:bold">(Name)</div>
<div class="t" style="left:1266px;top:963px;letter-spacing:0.12px">Specifies the name of the selected folder. Read-only for special folders</div>


<!-- ===== STATUS BAR ===== -->
<div class="a" style="left:0;top:999px;width:1920px;height:7px;background:#5D6B99"></div>
<div class="a" style="left:0;top:1006px;width:1920px;height:8px;background:#40508D"></div>
<div class="a" style="left:4px;top:1010px;width:16px;height:4px;border:1px solid #fff;border-bottom:none"></div>
<div class="a" style="left:1634px;top:1010px;width:3px;height:4px;background:#E0E4F0"></div>
<div class="a" style="left:1784px;top:1010px;width:14px;height:4px;background:#F0F2F8"></div>
<div class="a" style="left:1893px;top:1010px;width:4px;height:4px;background:#D0D6EA"></div>

</body></html>
